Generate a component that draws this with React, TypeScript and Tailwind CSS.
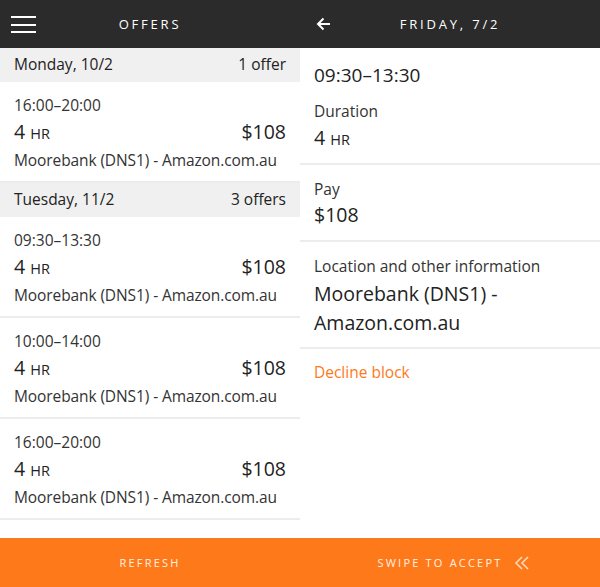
import React from "react";

const font = { fontFamily: '"Open Sans", "Noto Sans", sans-serif' };

function Item({ time }: { time: string }) {
  return (
    <div className="h-[101px] border-b-2 border-[#ececec] px-[14px] pt-[12px]">
      <div className="text-[15.5px] leading-[22px] text-[#333]">{time}</div>
      <div className="mt-[3px] flex items-baseline justify-between leading-[26px]">
        <div className="text-[19.5px] text-[#222]">
          4 <span className="text-[14.5px]">HR</span>
        </div>
        <div className="text-[19.5px] text-[#222]">$108</div>
      </div>
      <div className="mt-[1px] whitespace-nowrap text-[15.5px] leading-[24px] tracking-[-0.1px] text-[#333]">
        Moorebank (DNS1) - Amazon.com.au
      </div>
    </div>
  );
}

function DayHeader({ day, count }: { day: string; count: string }) {
  return (
    <div className="flex h-[34px] items-center justify-between bg-[#f0f0f0] px-[14px] text-[15.5px] text-[#222]">
      <span>{day}</span>
      <span>{count}</span>
    </div>
  );
}

export default function App() {
  return (
    <div className="flex h-[587px] w-[600px] flex-col bg-white" style={font}>
      <div className="flex flex-1">
        <div className="flex w-[300px] flex-col">
          <div className="relative flex h-[48px] items-center justify-center bg-[#2b2b2b] pt-[2px]">
            <div className="absolute left-[11px] top-[16px] flex w-[25px] flex-col gap-[5.5px]">
              <div className="h-[2px] bg-white" />
              <div className="h-[2px] bg-white" />
              <div className="h-[2px] bg-white" />
            </div>
            <span className="text-[13px] tracking-[2.8px] text-white">OFFERS</span>
          </div>
          <DayHeader day="Monday, 10/2" count="1 offer" />
          <Item time="16:00–20:00" />
          <DayHeader day="Tuesday, 11/2" count="3 offers" />
          <Item time="09:30–13:30" />
          <Item time="10:00–14:00" />
          <Item time="16:00–20:00" />
        </div>
        <div className="flex w-[300px] flex-col">
          <div className="relative flex h-[48px] items-center justify-center bg-[#2b2b2b] pt-[2px]">
            <svg className="absolute left-[16px] top-[17px]" width="15" height="14" viewBox="0 0 15 14" fill="none" stroke="white" strokeWidth="2">
              <path d="M14 7H2M7.5 1.5L2 7l5.5 5.5" />
            </svg>
            <span className="text-[13px] tracking-[2.8px] text-white">FRIDAY, 7/2</span>
          </div>
          <div className="border-b-2 border-[#ececec] px-[14px] pt-[14px] pb-[10px]">
            <div className="text-[19px] leading-[26px] text-[#222]">09:30–13:30</div>
            <div className="mt-[12px] text-[15.5px] leading-[22px] text-[#333]">Duration</div>
            <div className="mt-[3px] text-[19.5px] leading-[26px] text-[#222]">
              4 <span className="text-[14.5px]">HR</span>
            </div>
          </div>
          <div className="border-b-2 border-[#ececec] px-[14px] pt-[13px] pb-[12px]">
            <div className="text-[15.5px] leading-[22px] text-[#333]">Pay</div>
            <div className="mt-[2px] text-[19.5px] leading-[26px] text-[#222]">$108</div>
          </div>
          <div className="border-b-2 border-[#ececec] px-[14px] pt-[13px] pb-[10px]">
            <div className="text-[15.5px] leading-[22px] text-[#333]">Location and other information</div>
            <div className="mt-[2px] text-[19.5px] leading-[29px] text-[#222]">
              Moorebank (DNS1) -<br />Amazon.com.au
            </div>
          </div>
          <div className="px-[14px] pt-[12px] text-[15.5px] leading-[22px] text-[#fb7a1c]">Decline block</div>
        </div>
      </div>
      <div className="flex h-[49px] bg-[#fe791a] pt-[1px] text-[11px] tracking-[2.2px] text-[#fff1e4]">
        <div className="flex w-[300px] items-center justify-center">REFRESH</div>
        <div className="flex w-[300px] items-center justify-center gap-[12px] pl-[8px]">
          <span>SWIPE TO ACCEPT</span>
          <svg width="16" height="14" viewBox="0 0 16 14" fill="none" stroke="#ffd9b8" strokeWidth="1.6">
            <path d="M8 1L2 7l6 6M14 1L8 7l6 6" />
          </svg>
        </div>
      </div>
    </div>
  );
}
